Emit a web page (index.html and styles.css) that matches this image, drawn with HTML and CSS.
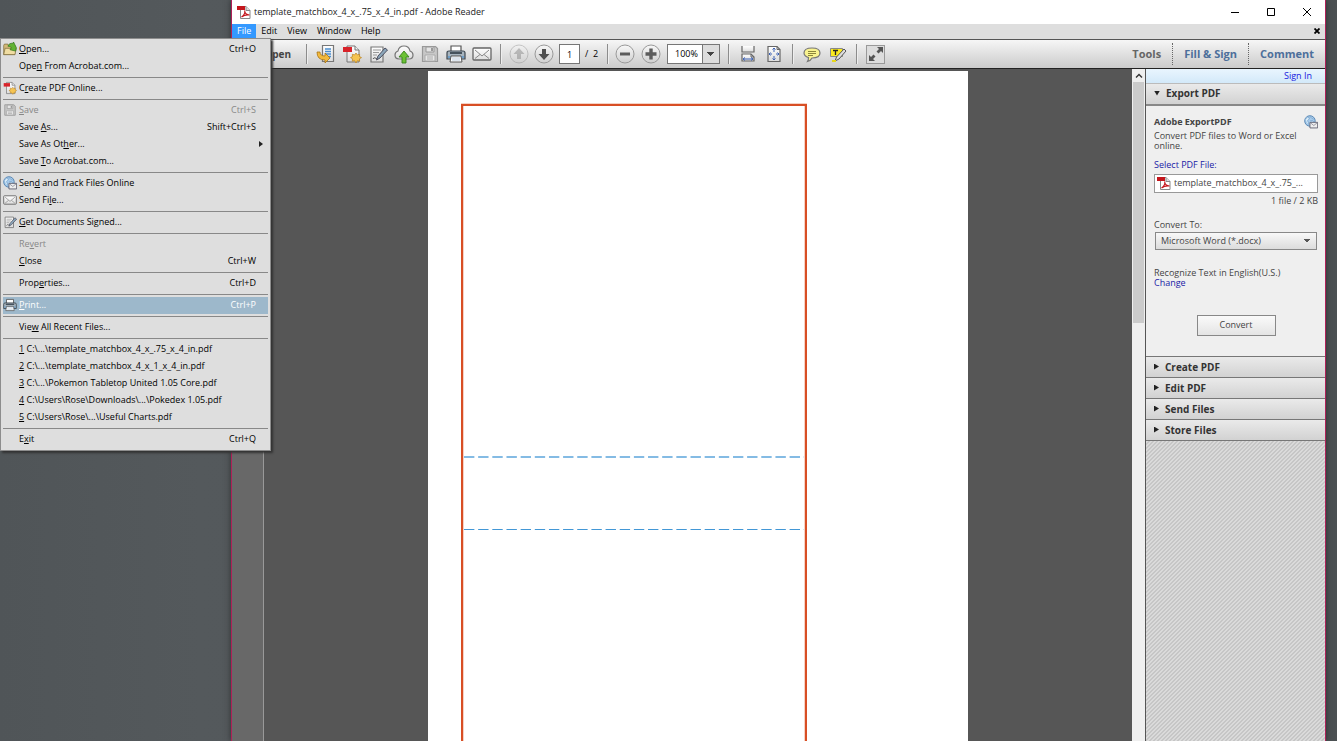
FILE: index.html
```html
<!DOCTYPE html>
<html lang="en">
<head>
<meta charset="utf-8">
<title>template_matchbox_4_x_.75_x_4_in.pdf - Adobe Reader</title>
<link rel="stylesheet" href="styles.css">
</head>
<body>
<svg class="defs" aria-hidden="true">
  <defs>
    <linearGradient id="sheet" x1="0" y1="0" x2="0" y2="1"><stop offset="0" stop-color="#fff"/><stop offset="1" stop-color="#dcdcdc"/></linearGradient>
    <linearGradient id="knob" x1="0" y1="0" x2="0" y2="1"><stop offset="0" stop-color="#f8f8f8"/><stop offset="1" stop-color="#cfcfcf"/></linearGradient>
    <symbol id="i-pdf" viewBox="0 0 14 14"><path d="M3.500 1.500h5.500l4 4v8H3.500z" fill="#fff" stroke="#888"/><path d="M9 1.500v4h4" fill="#ddd" stroke="#888"/><path d="M0 1h8v4H0z" fill="#c4161c"/><path d="M4.500 12c2-1.500 3.700-4.500 3.200-6.500C7.500 8 9.500 10 12.500 10 9.500 9.500 6.500 10.500 4.500 12z" fill="none" stroke="#c4161c" stroke-width="1.100"/></symbol>
    <symbol id="i-create" viewBox="0 0 20 20"><path d="M5 2h8l4 4v12H5z" fill="url(#sheet)" stroke="#777"/><path d="M13 2v4h4" fill="#eee" stroke="#777"/><path d="M1 3h9v5H1z" fill="#d8232a"/><path d="M14 9l1.300 1.900 2.300-.6-.1 2.300 2 1-2 1.200.1 2.400-2.300-.5L14 19l-1.400-2.300-2.300.5.2-2.400-2-1.200 2-1-.2-2.300 2.300.6z" fill="#f5c451" stroke="#b97f1c" stroke-width=".7"/></symbol>
    <symbol id="i-save" viewBox="0 0 20 20"><path d="M2.500 2.500h13l2 2v13h-15z" fill="#c7c7c7" stroke="#999" stroke-width="1.200"/><path d="M6 3h8v5H6z" fill="#e5e5e5" stroke="#999"/><path d="M11 4h2v3h-2z" fill="#999"/><path d="M5 11h10v6H5z" fill="#e8e8e8" stroke="#aaa"/><path d="M7 13h6M7 15h6" stroke="#aaa"/></symbol>
    <symbol id="i-mail" viewBox="0 0 20 16"><rect x="1" y="2" width="18" height="12" rx="1" fill="url(#sheet)" stroke="#666" stroke-width="1.300"/><path d="M3 4l7 6 7-6M3 12.500l5-4M17 12.500l-5-4" fill="none" stroke="#888"/></symbol>
    <symbol id="i-sign" viewBox="0 0 20 20"><path d="M3 3h12v15H3z" fill="url(#sheet)" stroke="#777" stroke-width="1.200"/><path d="M5 6h8M5 8.500h6M5 11h4" stroke="#999"/><path d="M5 15c2-3 3 1 5-1" fill="none" stroke="#444"/><path d="M17 4l2.500 2L12 14l-3.500 2 1.500-4z" fill="#8ba6ba" stroke="#445" stroke-width=".9"/></symbol>
    <symbol id="i-print" viewBox="0 0 20 20"><path d="M5 2h10v7H5z" fill="#fff" stroke="#555" stroke-width="1.200"/><path d="M1 9q0-2 2-2h14q2 0 2 2v6H1z" fill="#a7b4be" stroke="#3d4750" stroke-width="1.200"/><path d="M4 8h12v2H4z" fill="#46525c"/><path d="M2 12h16v2H2z" fill="#6e9fc9"/><path d="M5 12h10l1 6H4z" fill="#fff" stroke="#555"/><path d="M6 14h8M6 16h8" stroke="#bccbdb"/></symbol>
    <symbol id="i-globe" viewBox="0 0 20 20"><circle cx="8.500" cy="8.500" r="7.500" fill="#a8cbea" stroke="#4679ac" stroke-width="1.200"/><path d="M2 6q3-5 6-2-1 3-3 4 2 2 1 6M9 2q1 3 5 4M9 8q4-1 5 2" fill="#d8ebf8" stroke="#6b9bc8"/><path d="M8.500 10.500h11v8h-11z" fill="#eee" stroke="#556" stroke-width="1.200"/><path d="M9 11l5 4 5-4" fill="none" stroke="#778"/></symbol>
    <symbol id="i-open" viewBox="0 0 20 20"><path d="M1 5l1-2h5l1 2h9v13H1z" fill="#d3b878" stroke="#7a6839"/><path d="M3 9h16l-2 9H1z" fill="#f0dda2" stroke="#7a6839"/><path d="M7 6q2-5 7-4l1-2 4 8-1 5-8-2 2-3q-2-2-5-2z" fill="#62b334" stroke="#2f741a"/></symbol>
  </defs>
</svg>

<div class="window">
  <header class="titlebar">
    <svg class="app-icon"><use href="#i-pdf"/></svg>
    <h1 class="title">template_matchbox_4_x_.75_x_4_in.pdf - Adobe Reader</h1>
    <div class="win-controls">
      <button aria-label="Minimize"><svg viewBox="0 0 10 10"><path d="M1 5.500h8" stroke="#000"/></svg></button>
      <button aria-label="Maximize"><svg viewBox="0 0 10 10"><path d="M1.500 1.500h7v7h-7z" fill="none" stroke="#000"/></svg></button>
      <button aria-label="Close"><svg viewBox="0 0 10 10"><path d="M1 1l8 8M9 1L1 9" stroke="#000"/></svg></button>
    </div>
  </header>

  <nav class="menubar">
    <button class="active">File</button><button>Edit</button><button>View</button><button>Window</button><button>Help</button>
    <button class="close-doc" aria-label="Close document"><svg viewBox="0 0 6 6"><path d="M.5.500l5 5M5.500.500l-5 5" stroke="#000" stroke-width="1.800"/></svg></button>
  </nav>

  <div class="toolbar">
    <button class="open-btn">Open</button>
    <span class="sep"></span>
    <div class="tools files">
      <button aria-label="Convert file"><svg viewBox="0 0 20 20"><path d="M6.500 1.500h11v16h-11z" fill="url(#sheet)" stroke="#777" stroke-width="1.200"/><path d="M9 5h6M9 7.500h6M9 10h6M12 12.500h3" stroke="#4b8fd0" stroke-width="1.300"/><path d="M1 8h3q0 4 5 4V9l5 5-5 5v-3Q1 16 1 8z" fill="#f2b93c" stroke="#a87415" stroke-width=".8"/></svg></button>
      <button aria-label="Create PDF"><svg><use href="#i-create"/></svg></button>
      <button aria-label="Sign"><svg><use href="#i-sign"/></svg></button>
      <button aria-label="Upload"><svg viewBox="0 0 20 20"><path d="M5 15q-4 0-4-4 0-3 3-4 1-5 6-5t6 5q3 1 3 4 0 4-4 4z" fill="url(#sheet)" stroke="#777" stroke-width="1.200"/><path d="M10 7l5 6h-3v6H8v-6H5z" fill="#6cc135" stroke="#37811b" stroke-width=".9"/></svg></button>
      <button aria-label="Save"><svg><use href="#i-save"/></svg></button>
      <button aria-label="Print"><svg><use href="#i-print"/></svg></button>
      <button aria-label="Email"><svg><use href="#i-mail"/></svg></button>
    </div>
    <span class="sep"></span>
    <div class="tools paging">
      <button class="faded" aria-label="Previous page"><svg viewBox="0 0 20 20"><circle cx="10" cy="10" r="9" fill="url(#knob)" stroke="#888"/><path d="M10 4l5.500 6H12v5H8v-5H4.500z" fill="#777"/></svg></button>
      <button aria-label="Next page"><svg viewBox="0 0 20 20"><circle cx="10" cy="10" r="9" fill="url(#knob)" stroke="#999"/><path d="M10 16l5.500-6H12V5H8v5H4.500z" fill="#505050"/></svg></button>
      <input class="page-no" type="text" value="1" aria-label="Page number">
      <span class="page-count">/&nbsp; 2</span>
    </div>
    <span class="sep"></span>
    <div class="tools zooming">
      <button aria-label="Zoom out"><svg viewBox="0 0 20 20"><circle cx="10" cy="10" r="9" fill="url(#knob)" stroke="#999"/><path d="M5 8.500h10v3H5z" fill="#5c5c5c"/></svg></button>
      <button aria-label="Zoom in"><svg viewBox="0 0 20 20"><circle cx="10" cy="10" r="9" fill="url(#knob)" stroke="#999"/><path d="M8.300 4.500h3.400v3.800h3.800v3.400h-3.800v3.800H8.300v-3.800H4.500V8.300h3.800z" fill="#5c5c5c"/></svg></button>
      <select class="zoom-level" aria-label="Zoom level"><option>100%</option></select>
    </div>
    <span class="sep"></span>
    <div class="tools fit">
      <button aria-label="Fit width"><svg viewBox="0 0 20 20"><path d="M4 2v6h12V2" fill="url(#sheet)" stroke="#666" stroke-width="1.200"/><path d="M4 17v-7h9l3 3v4z" fill="url(#sheet)" stroke="#666" stroke-width="1.200"/><path d="M13 10v3h3" fill="none" stroke="#666"/><path d="M5 15h10M7 13.500L5 15l2 1.500M13 13.500l2 1.500-2 1.500" fill="none" stroke="#3e62b4"/></svg></button>
      <button aria-label="Fit page"><svg viewBox="0 0 20 20"><path d="M4 2.500h9l3 3v12H4z" fill="url(#sheet)" stroke="#666" stroke-width="1.200"/><path d="M13 2.500v3h3" fill="none" stroke="#666"/><path d="M10 4v4M10 12v4M5 10h3M12 10h3M8.500 5.500L10 4l1.500 1.500M8.500 14.500L10 16l1.500-1.500M6.500 8.500L5 10l1.500 1.500M13.500 8.500L15 10l-1.500 1.500" fill="none" stroke="#3e62b4"/></svg></button>
    </div>
    <span class="sep"></span>
    <div class="tools notes">
      <button aria-label="Add comment"><svg viewBox="0 0 20 20"><path d="M10 4c5 0 8 2 8 5s-3 5-8 5c-1 2-2.500 3-4.500 3.500 1-1.500 1-2.500 1-4C3.500 12.500 2 11 2 9c0-3 3-5 8-5z" fill="#f9f38f" stroke="#777" stroke-width="1.200"/><path d="M6 7.500h8M6 9.500h8M6 11.500h5" stroke="#8b853b"/></svg></button>
      <button aria-label="Highlight text"><svg viewBox="0 0 20 20"><path d="M2.500 4.500h12v8h-12z" fill="#fbea1f" stroke="#888"/><path d="M5 6.500h5M7.500 6.500v4.500" stroke="#222" stroke-width="1.300"/><path d="M16 5l2 2-7 8-4 2 1.500-4z" fill="#ddd" stroke="#555"/><path d="M4 16h4v2H4z" fill="#e8d81b"/></svg></button>
    </div>
    <span class="sep"></span>
    <button class="fullscreen" aria-label="Read mode"><svg viewBox="0 0 16 16"><path d="M15 1v6l-2-2-2.500 2.500-2-2L11 3 9 1zM1 15V9l2 2 2.500-2.500 2 2L5 13l2 2z" fill="#555"/></svg></button>
    <div class="pane-tabs">
      <button class="tab current">Tools</button><button class="tab">Fill &amp; Sign</button><button class="tab">Comment</button>
    </div>
  </div>

  <div class="workspace">
    <div class="nav-rail"></div>
    <main class="document">
      <div class="sheet">
        <div class="box"><div class="fold soft"></div><div class="fold"></div></div>
      </div>
    </main>
    <div class="scrollbar">
      <button aria-label="Scroll up"><svg viewBox="0 0 8 8"><path d="M1 5.500L4 2.500l3 3" fill="none" stroke="#333" stroke-width="1.400"/></svg></button>
      <div class="thumb"></div>
    </div>
    <aside class="pane">
      <div class="signin"><a href="#">Sign In</a></div>
      <button class="section expanded"><i class="tri down"></i>Export PDF</button>
      <div class="export">
        <div class="export-head"><h2>Adobe ExportPDF</h2><svg class="globe"><use href="#i-globe"/></svg></div>
        <p class="desc">Convert PDF files to Word or Excel online.</p>
        <a class="select-file" href="#">Select PDF File:</a>
        <div class="file-field"><svg class="app-icon"><use href="#i-pdf"/></svg><span>template_matchbox_4_x_.75_...</span></div>
        <p class="size">1 file / 2 KB</p>
        <label class="to" for="format">Convert To:</label>
        <select id="format" class="format"><option>Microsoft Word (*.docx)</option></select>
        <p class="lang">Recognize Text in English(U.S.)</p>
        <a class="change" href="#">Change</a>
        <button class="convert">Convert</button>
      </div>
      <button class="section"><i class="tri"></i>Create PDF</button>
      <button class="section"><i class="tri"></i>Edit PDF</button>
      <button class="section"><i class="tri"></i>Send Files</button>
      <button class="section"><i class="tri"></i>Store Files</button>
      <div class="hatch"></div>
    </aside>
  </div>
</div>

<div class="menu" role="menu">
  <button class="item" role="menuitem"><svg><use href="#i-open"/></svg><span><u>O</u>pen...</span><kbd>Ctrl+O</kbd></button>
  <button class="item" role="menuitem"><span>Ope<u>n</u> From Acrobat.com...</span></button>
  <hr>
  <button class="item" role="menuitem"><svg><use href="#i-create"/></svg><span>C<u>r</u>eate PDF Online...</span></button>
  <hr>
  <button class="item disabled" role="menuitem"><svg><use href="#i-save"/></svg><span><u>S</u>ave</span><kbd>Ctrl+S</kbd></button>
  <button class="item" role="menuitem"><span>Save <u>A</u>s...</span><kbd>Shift+Ctrl+S</kbd></button>
  <button class="item" role="menuitem"><span>Save As Ot<u>h</u>er...</span><i class="tri sub"></i></button>
  <button class="item" role="menuitem"><span>Save <u>T</u>o Acrobat.com...</span></button>
  <hr>
  <button class="item" role="menuitem"><svg><use href="#i-globe"/></svg><span>Sen<u>d</u> and Track Files Online</span></button>
  <button class="item" role="menuitem"><svg><use href="#i-mail"/></svg><span>Send Fi<u>l</u>e...</span></button>
  <hr>
  <button class="item" role="menuitem"><svg><use href="#i-sign"/></svg><span><u>G</u>et Documents Signed...</span></button>
  <hr>
  <button class="item disabled" role="menuitem"><span>Re<u>v</u>ert</span></button>
  <button class="item" role="menuitem"><span><u>C</u>lose</span><kbd>Ctrl+W</kbd></button>
  <hr>
  <button class="item" role="menuitem"><span>Prop<u>e</u>rties...</span><kbd>Ctrl+D</kbd></button>
  <hr>
  <button class="item selected" role="menuitem"><svg><use href="#i-print"/></svg><span><u>P</u>rint...</span><kbd>Ctrl+P</kbd></button>
  <hr>
  <button class="item" role="menuitem"><span>Vie<u>w</u> All Recent Files...</span></button>
  <hr>
  <button class="item" role="menuitem"><span><u>1</u> C:\...\template_matchbox_4_x_.75_x_4_in.pdf</span></button>
  <button class="item" role="menuitem"><span><u>2</u> C:\...\template_matchbox_4_x_1_x_4_in.pdf</span></button>
  <button class="item" role="menuitem"><span><u>3</u> C:\...\Pokemon Tabletop United 1.05 Core.pdf</span></button>
  <button class="item" role="menuitem"><span><u>4</u> C:\Users\Rose\Downloads\...\Pokedex 1.05.pdf</span></button>
  <button class="item" role="menuitem"><span><u>5</u> C:\Users\Rose\...\Useful Charts.pdf</span></button>
  <hr>
  <button class="item" role="menuitem"><span>E<u>x</u>it</span><kbd>Ctrl+Q</kbd></button>
</div>
</body>
</html>
```
FILE: styles.css
```css
* { box-sizing: border-box; }
html, body { height: 100%; }
body {
  margin: 0;
  overflow: hidden;
  background: linear-gradient(90deg, #505558, #54595c 200px, #4c5153);
  font: 9px/12px "Open Sans", "Noto Sans", sans-serif;
  color: #000;
}
h1, h2, p { margin: 0; font: inherit; }
button, input, select { margin: 0; padding: 0; border: 0; background: none; font: inherit; color: inherit; }
button { display: flex; align-items: center; justify-content: center; }
a { text-decoration: none; color: #1717e0; }
svg { display: block; flex: none; }
.defs { position: absolute; width: 0; height: 0; }

.window {
  display: flex;
  flex-direction: column;
  height: 100vh;
  margin: 0 11px 0 231px;
  border: solid #b02058;
  border-width: 0 1px;
  box-shadow: 0 0 6px #2c2f31;
}
.titlebar { display: flex; align-items: center; height: 24px; padding: 0 8px 1px 5px; background: #fff; }
.app-icon { width: 14px; height: 14px; }
.title { margin-left: 3px; color: #222; }
.win-controls { display: flex; gap: 26px; margin-left: auto; padding-right: 5px; }
.win-controls svg { width: 10px; height: 10px; }

.menubar { display: flex; height: 15px; background: #dedede; }
.menubar button { padding: 0 5px 1px; }
.menubar .active { background: #3499ff; color: #fff; }
.menubar .close-doc { margin-left: auto; padding-right: 5px; }
.close-doc svg { width: 6px; height: 6px; }

.toolbar {
  display: flex;
  align-items: center;
  height: 30px;
  border-top: 1px solid #555;
  border-bottom: 1px solid #222;
  background: linear-gradient(#f6f6f6, #cbcbcb);
}
.open-btn { width: 74px; padding-right: 15px; justify-content: flex-end; font-size: 10px; font-weight: 700; color: #444; }
.sep { width: 2px; height: 20px; border-left: 1px solid #8c8c8c; border-right: 1px solid #eee; flex: none; }
.tools { display: flex; align-items: center; }
.tools svg { width: 20px; height: 20px; }
.files { gap: 6px; padding: 0 8px; }
.paging { gap: 5px; padding: 0 7px; }
.faded { opacity: .4; }
.page-no { width: 21px; height: 20px; border: 1px solid #777; background: #fff; text-align: center; }
.page-count { width: 15px; white-space: nowrap; }
.zooming { gap: 6px; padding: 0 8px 0 6px; }
.zoom-level {
  appearance: none;
  width: 53px;
  height: 20px;
  padding-left: 7px;
  border: 1px solid #777;
  background:
    linear-gradient(135deg, #444 50%, transparent 50%) right 4px center / 4px 4px no-repeat,
    linear-gradient(225deg, #444 50%, transparent 50%) right 8px center / 4px 4px no-repeat,
    linear-gradient(#777, #777) right 16px top / 1px 100% no-repeat,
    linear-gradient(#ddd, #ddd) right top / 16px 100% no-repeat,
    #fff;
}
.fit { gap: 6px; padding: 0 8px; }
.notes { gap: 6px; padding: 0 8px; }
.fullscreen { width: 19px; height: 19px; margin-left: 8px; border: 1px solid #999; background: #ddd; }
.fullscreen svg { width: 16px; height: 16px; }
.pane-tabs { display: flex; margin-left: auto; height: 22px; }
.tab { padding: 0 11px; border-left: 1px dotted #666; font-size: 11px; font-weight: 700; color: #4d6f9b; }
.tab.current { border-left: 0; color: #666; }

.workspace { display: flex; flex: 1; min-height: 0; }
.nav-rail { width: 32px; background: #686868; border-right: 1px solid #999; box-shadow: 1px 0 #333; flex: none; }
.document { flex: 1; display: flex; justify-content: center; padding-top: 2px; background: #565656; overflow: hidden; }
.sheet { width: 540px; padding: 33px 161px 0 33px; background: #fff; }
.box { height: 900px; padding-top: 350px; border: 2px solid #d84f25; box-shadow: 0 -1px #f6d2c5, inset 1px 0 #f6d2c5, inset -1px 0 #f6d2c5; }
.fold { height: 1px; margin: 0 1px; background: linear-gradient(90deg, #4297d6 10px, transparent 10px) 0 0 / 14px 100% round; }
.fold.soft { height: 2px; margin-bottom: 71px; opacity: .65; }
.scrollbar { width: 13px; background: #efefef; flex: none; }
.scrollbar button { width: 13px; height: 13px; }
.scrollbar svg { width: 8px; height: 8px; }
.thumb { height: 241px; margin: 0 1px; background: #cbcbcb; }

.pane { display: flex; flex-direction: column; width: 180px; border-left: 1px solid #555; background: #efefef; color: #444; flex: none; }
.signin { height: 14px; padding-right: 13px; background: linear-gradient(#e9f5fe, #d3e9f9); text-align: right; line-height: 14px; }
.section {
  justify-content: flex-start;
  height: 21px;
  padding: 0 0 1px 8px;
  gap: 6px;
  border-top: 1px solid #777;
  background: linear-gradient(#eaeaea, #d2d2d2);
  font-size: 10px;
  font-weight: 700;
  color: #333;
  flex: none;
}
.expanded { height: 23px; padding-bottom: 2px; border-top-color: #bbb; border-bottom: 2px solid #888; }
.tri { width: 5px; height: 6px; background: #222; clip-path: polygon(0 0, 100% 50%, 0 100%); }
.tri.down { width: 6px; height: 5px; clip-path: polygon(0 0, 100% 0, 50% 100%); }
.export { display: flex; flex-direction: column; height: 250px; padding: 9px 7px 0 8px; line-height: 10px; }
.export-head { display: flex; justify-content: space-between; height: 16px; line-height: 14px; }
.export-head h2 { font-weight: 700; }
.globe { width: 14px; height: 14px; }
.select-file { margin-top: 9px; color: #1a1aa6; }
.file-field { display: flex; align-items: center; height: 19px; margin-top: 4px; padding: 0 0 2px 2px; gap: 3px; border: 1px solid #999; background: #fff; }
.size { margin-top: 3px; text-align: right; }
.to { margin-top: 14px; }
.format {
  appearance: none;
  height: 18px;
  margin: 2px 1px 0;
  padding-left: 5px;
  border: 1px solid #888;
  background:
    linear-gradient(135deg, #555 50%, transparent 50%) right 5px center / 4px 4px no-repeat,
    linear-gradient(225deg, #555 50%, transparent 50%) right 9px center / 4px 4px no-repeat,
    linear-gradient(#f8f8f8, #dcdcdc);
}
.lang { margin-top: 18px; }
.change { color: #1a1aa6; }
.convert { align-self: center; width: 79px; height: 21px; margin-top: 27px; padding-bottom: 1px; border: 1px solid #888; background: linear-gradient(#fafafa, #e4e4e4); }
.hatch {
  flex: 1;
  border-top: 1px solid #777;
  background: linear-gradient(135deg, #dadada 25%, #c6c6c6 25% 50%, #dadada 50% 75%, #c6c6c6 75%) 0 0 / 4px 4px;
}

.menu {
  position: absolute;
  top: 38px;
  left: 0;
  width: 271px;
  padding: 2px;
  border: 1px solid #8d8d8d;
  background: #dedede;
  box-shadow: 2px 2px 2px #333;
}
.item { width: 100%; height: 17px; padding: 0 12px 1px 16px; justify-content: flex-start; }
.item svg { width: 14px; height: 14px; margin: 0 2px 0 -16px; }
.item kbd { margin-left: auto; font: inherit; }
.item.disabled { color: #888; }
.item.selected { background: #9db8cb; color: #fff; }
.sub { margin: 0 -7px 0 auto; width: 4px; }
.menu hr { height: 1px; margin: 2px 0; border: 0; background: #888; }
```
